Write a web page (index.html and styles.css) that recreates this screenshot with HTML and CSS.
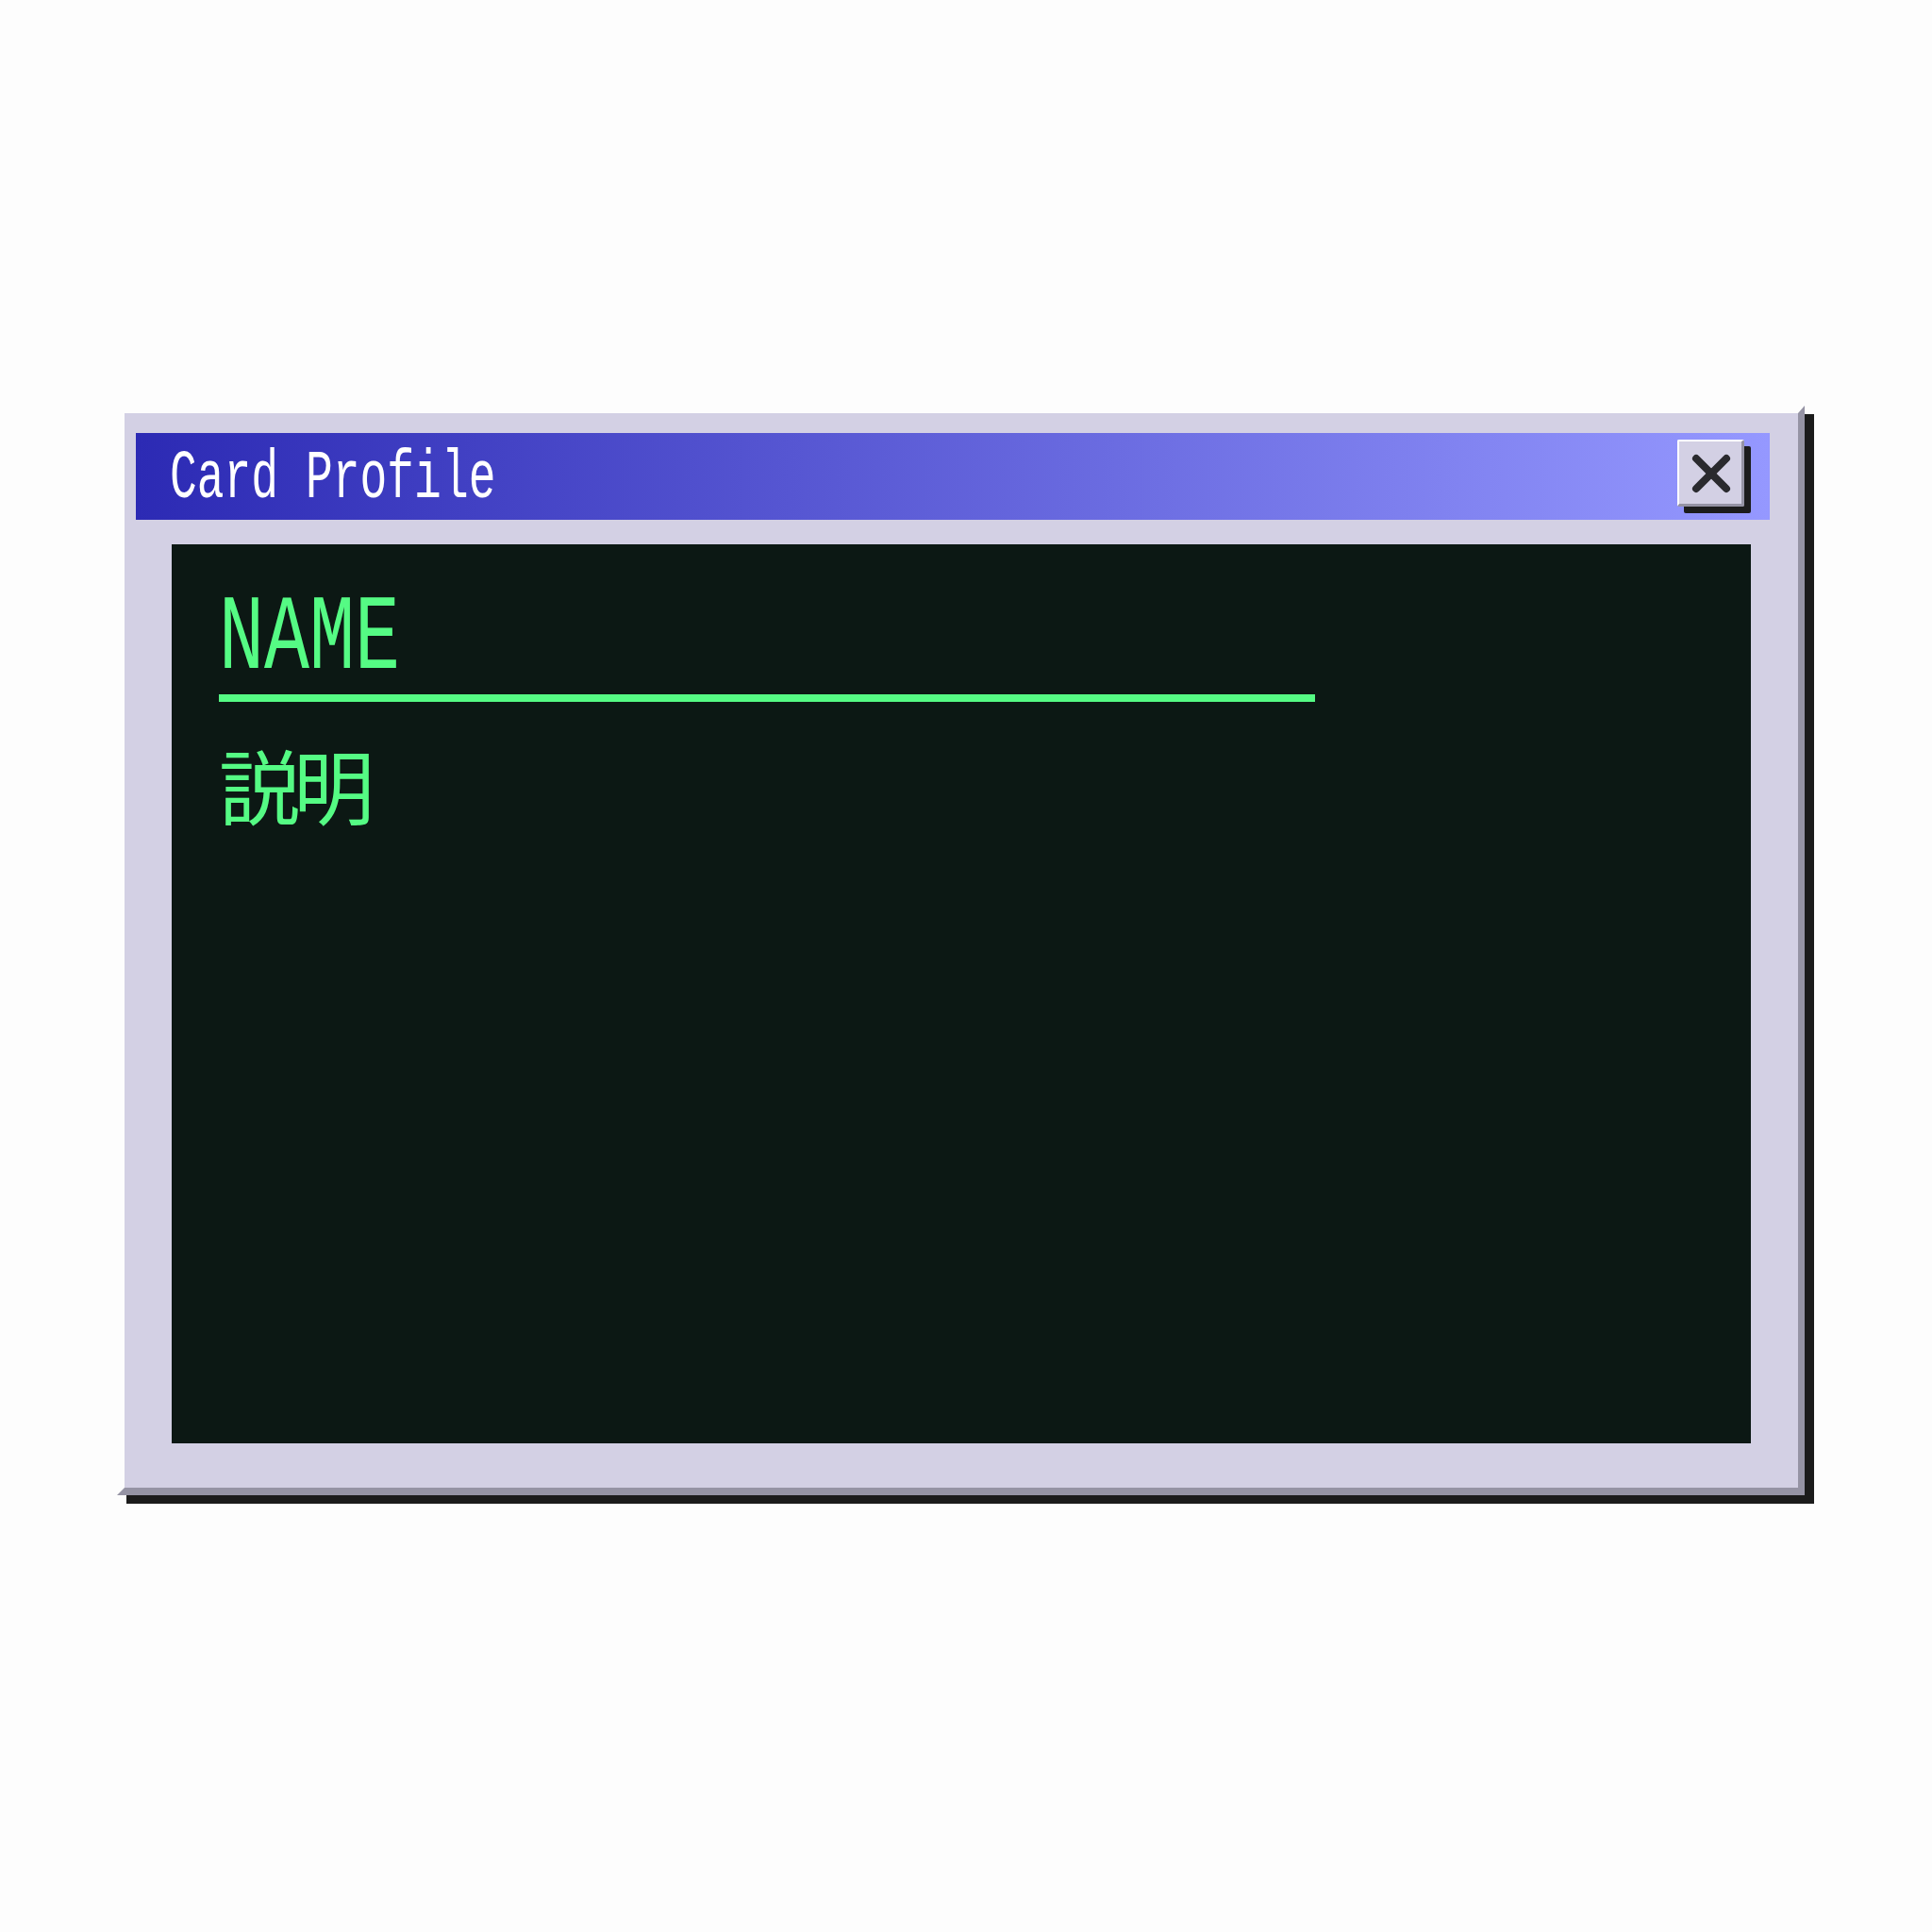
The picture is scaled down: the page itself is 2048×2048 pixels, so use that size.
FILE: index.html
```html
<!DOCTYPE html>
<html lang="ja">
<head>
<meta charset="utf-8">
<title>Card Profile</title>
<link rel="stylesheet" href="styles.css">
</head>
<body>
<div class="window">
  <div class="titlebar">
    <span class="title"><span class="title-inner">Card Profile</span></span>
    <button class="close" type="button" aria-label="Close">
      <svg width="66" height="66" viewBox="0 0 66 66" aria-hidden="true">
        <path d="M18 18 L50 50 M50 18 L18 50" stroke="#2a2a2e" stroke-width="8" stroke-linecap="round" fill="none"/>
      </svg>
    </button>
  </div>
  <div class="screen">
    <div class="name"><span class="name-inner">NAME</span></div>
    <div class="desc">説明</div>
  </div>
</div>
</body>
</html>
```

FILE: styles.css
```css
html, body {
  margin: 0;
  padding: 0;
}
body {
  background: #fdfdfd;
  padding: 430px 0 400px 124px;
  min-height: 2048px;
  box-sizing: border-box;
}
.window {
  box-sizing: border-box;
  width: 1789px;
  height: 1155px;
  border-style: solid;
  border-width: 8px 7px 8px 8px;
  border-color: transparent #9593a4 #9593a4 transparent;
  background: #d3d0e4;
  background-clip: padding-box;
  box-shadow: 10px 9px 0 #1b1b1b;
  padding: 21px 30px 47px 12px;
  display: flex;
  flex-direction: column;
}
.titlebar {
  height: 92px;
  flex: 0 0 92px;
  background: linear-gradient(90deg, #2c2ab4 0%, #9598ff 100%);
  display: flex;
  align-items: flex-start;
  padding-left: 36px;
  overflow: hidden;
}
.title {
  display: block;
  font-family: "Liberation Mono", "DejaVu Sans Mono", monospace;
  font-size: 72.7px;
  line-height: 86px;
  padding-top: 6px;
  color: #ffffff;
  white-space: nowrap;
  width: 400px;
}
.title-inner {
  display: inline-block;
  transform: scaleX(0.66);
  transform-origin: left center;
}
.close {
  margin: 7px 27px 0 auto;
  width: 71px;
  height: 71px;
  box-sizing: border-box;
  padding: 0;
  background: #d3d0e4;
  border-style: solid;
  border-width: 2px 3px 3px 2px;
  border-color: #ffffff #9593a4 #9593a4 #ffffff;
  border-radius: 2px;
  box-shadow: 7px 7px 0 #1c1c1c;
  display: flex;
  align-items: center;
  justify-content: center;
}
.close svg {
  display: block;
}
.screen {
  margin: 26px 20px 0 38px;
  flex: 0 0 953px;
  background: #0c1814;
  padding: 45px 50px 0 50px;
  box-sizing: border-box;
  color: #55fb84;
}
.name {
  width: 1162px;
  font-family: "Liberation Mono", "DejaVu Sans Mono", monospace;
  font-size: 113px;
  line-height: 113px;
  white-space: nowrap;
  padding-bottom: 1px;
  border-bottom: 8px solid #55fb84;
}
.name-inner {
  display: inline-block;
  transform: scaleX(0.708);
  transform-origin: left center;
}
.desc {
  margin-top: 44px;
  font-family: "Noto Sans CJK JP", "Noto Sans CJK SC", sans-serif;
  font-size: 86px;
  line-height: 86px;
  letter-spacing: -7px;
}
```
